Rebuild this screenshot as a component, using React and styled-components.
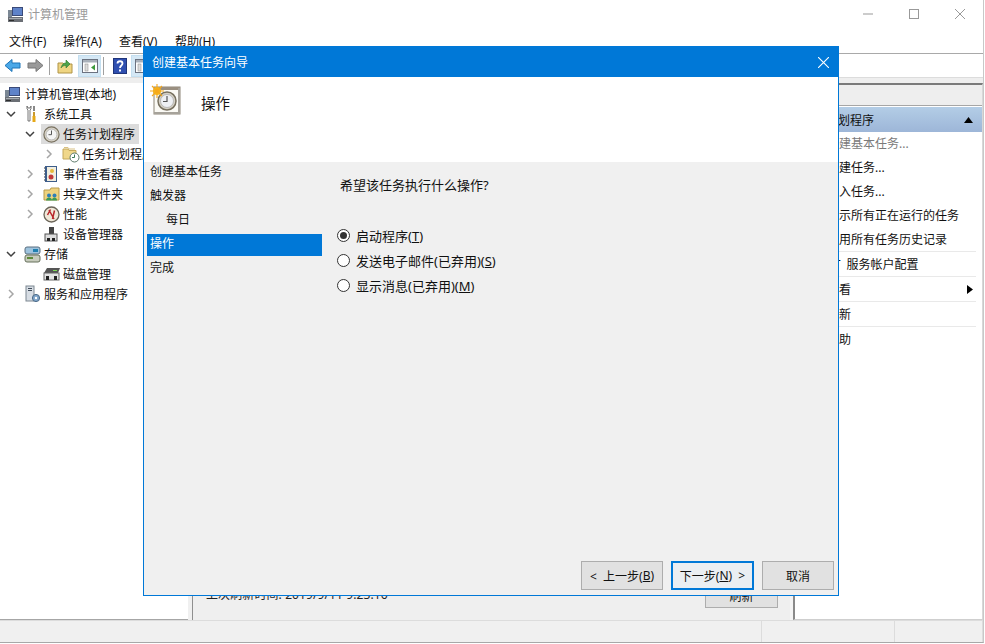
import React from "react";
import styled, { createGlobalStyle } from "styled-components";

const Global = createGlobalStyle`
  html, body { margin: 0; padding: 0; background: #fff; }
  body { font-family: "Noto Sans", "Noto Sans CJK SC", sans-serif; font-size: 12px; color: #111; overflow: hidden; }
  * { box-sizing: border-box; }
`;

const Page = styled.div`
  position: relative;
  width: 985px;
  height: 644px;
  overflow: hidden;
  background: #fff;
`;
const Win = styled.div`
  width: 984px;
  height: 643px;
  display: flex;
  flex-direction: column;
  border-right: 1px solid #c8c8c8;
  border-bottom: 1px solid #a8a8a8;
`;
const TitleBar = styled.div`
  height: 30px;
  flex: none;
  display: flex;
  align-items: center;
  padding: 0 0 2px 7px;
  color: #9a9a9a;
`;
const TitleText = styled.span`
  flex: 1;
  font-size: 12px;
  margin-left: 4px;
`;
const WinBtn = styled.div`
  width: 46px;
  height: 28px;
  flex: none;
  display: flex;
  align-items: center;
  justify-content: center;
`;
const MenuBar = styled.div`
  height: 23px;
  flex: none;
  display: flex;
  align-items: center;
  padding-left: 9px;
  gap: 16px;
  padding-top: 1px;
`;
const MenuItem = styled.span`
  width: 40px;
  white-space: nowrap;
  line-height: 20px;
  &:first-child { width: 38px; }
`;
const ToolBar = styled.div`
  height: 24px;
  flex: none;
  border-top: 1px solid #a9a9a9;
  display: flex;
  align-items: center;
  padding-left: 1px;
`;
const ToolBtn = styled.div`
  width: ${(p) => p.$w || 23}px;
  height: 22px;
  flex: none;
  display: flex;
  align-items: center;
  justify-content: center;
  background: ${(p) => (p.$on ? "#d5e8f5" : "transparent")};
  border: 1px solid ${(p) => (p.$on ? "#c4dff0" : "transparent")};
`;
const ToolSep = styled.div`
  width: 1px;
  height: 18px;
  background: #a0a0a0;
  margin: 0 ${(p) => p.$r}px 0 ${(p) => p.$l}px;
  flex: none;
`;
const Strip = styled.div`
  height: 6px;
  flex: none;
  background: #eeeeee;
  border-top: 1px solid #dcdcdc;
`;
const Main = styled.div`
  flex: 1;
  min-height: 0;
  display: flex;
  background: #f0f0f0;
`;
const Tree = styled.div`
  width: 188px;
  flex: none;
  background: #fff;
  padding-top: 1px;
  border-bottom: 1px solid #a6a6a6;
  overflow: hidden;
`;
const Row = styled.div`
  height: 20px;
  display: flex;
  align-items: center;
  padding-left: ${(p) => (p.$depth === 0 ? 4 : 5 + (p.$depth - 1) * 19)}px;
  white-space: nowrap;
`;
const Chevron = styled.span`
  width: 19px;
  flex: none;
  display: flex;
  align-items: center;
`;
const IconSlot = styled.span`
  width: ${(p) => (p.$root ? 21 : 20)}px;
  flex: none;
  display: flex;
  align-items: center;
`;
const Label = styled.span`
  line-height: 19px;
  padding: 0 1px 0 0;
`;
const SelWrap = styled.span`
  display: flex;
  align-items: center;
  height: 20px;
  margin-left: -2px;
  padding-left: 2px;
  padding-right: 3px;
  background: #dcdcdc;
`;
const TreeSplitter = styled.div`
  width: 5px;
  flex: none;
  background: #f0f0f0;
  border-right: 1px solid #8f8f8f;
`;
const Center = styled.div`
  width: 597px;
  flex: none;
  background: #efefef;
  padding: 504px 0 0 13px;
  display: flex;
  align-items: flex-start;
  justify-content: space-between;
`;
const Refresh = styled.div`
  white-space: nowrap;
  line-height: 16px;
  font-size: 12px;
  letter-spacing: 0.1px;
  color: #222;
`;
const RefreshBtn = styled.div`
  width: 73px;
  height: 24px;
  margin: -3px 12px 0 0;
  background: #e1e1e1;
  border: 1px solid #adadad;
  display: flex;
  align-items: center;
  justify-content: center;
`;
const PaneGap = styled.div`
  width: 3px;
  flex: none;
  background: #f4f4f4;
`;
const Actions = styled.div`
  width: 190px;
  flex: none;
  background: #fff;
  border-left: 2px solid #8a8a8a;
  border-top: 2px solid #7a7a7a;
  border-bottom: 1px solid #cfcfcf;
  border-right: 1px solid #d8d8d8;
  display: flex;
  flex-direction: column;
`;
const ActionsTop = styled.div`
  height: 21px;
  flex: none;
  background: #eeeeee;
  border-bottom: 1px solid #a6a6a6;
  margin-bottom: 1px;
`;
const ActionsHead = styled.div`
  height: 25px;
  flex: none;
  background: linear-gradient(#b3cde6, #9db6d8);
  display: flex;
  align-items: center;
  justify-content: space-between;
  padding: 0 9px 0 7px;
  color: #111;
`;
const ActionsBody = styled.div`
  flex: 1;
  margin: -1px 6px 0 0;
`;
const ActionRow = styled.div`
  height: ${(p) => p.$h || 24}px;
  display: flex;
  align-items: center;
  justify-content: space-between;
  padding-left: 32px;
  padding-right: 3px;
  white-space: nowrap;
  word-spacing: 3px;
  color: ${(p) => (p.$dim ? "#7a7a7a" : "#111")};
  border-bottom: ${(p) => (p.$line ? "1px solid #e9e9e9" : "none")};
`;
const Status = styled.div`
  height: 22px;
  flex: none;
  display: grid;
  grid-template-columns: 762px 133px 1fr;
  background: #f0f0f0;
  border-top: 1px solid #dcdcdc;
`;
const StatusCell = styled.div`
  border-right: 1px solid #dcdcdc;
  background: #f0f0f0;
`;

/* dialog sits on top of the window */
const Dialog = styled.div`
  position: absolute;
  left: 143px;
  top: 46px;
  width: 696px;
  height: 550px;
  background: #f0f0f0;
  border: 1px solid #0078d7;
  display: flex;
  flex-direction: column;
`;
const DlgTitle = styled.div`
  height: 30px;
  flex: none;
  background: #0078d7;
  color: #fff;
  display: flex;
  align-items: center;
  justify-content: space-between;
  padding: 0 9px 0 8px;
`;
const DlgHead = styled.div`
  height: 85px;
  flex: none;
  background: #fff;
  display: flex;
  align-items: flex-start;
  padding: 7px 0 0 6px;
`;
const DlgHeadText = styled.div`
  font-size: 14.5px;
  margin-left: 19px;
  margin-top: 8px;
  line-height: 22px;
`;
const DlgBody = styled.div`
  flex: 1;
  display: flex;
  min-height: 0;
`;
const Steps = styled.div`
  width: 178px;
  flex: none;
  margin-top: -3px;
  padding: 0 0 0 3px;
`;
const Step = styled.div`
  display: flex;
  align-items: center;
  padding-left: ${(p) => (p.$sub ? 19 : 3)}px;
  padding-bottom: ${(p) => (p.$on ? 4 : 0)}px;
  background: ${(p) => (p.$on ? "#0078d7" : "transparent")};
  color: ${(p) => (p.$on ? "#fff" : "#111")};
  height: ${(p) => (p.$on ? 22 : 24)}px;
  margin: ${(p) => (p.$on ? "3px 0 -1px" : "0")};
`;
const Content = styled.div`
  flex: 1;
  padding: 13px 0 0 18px;
  font-size: 13px;
`;
const Question = styled.div`
  line-height: 20px;
  margin-bottom: 28px;
`;
const Radios = styled.div`
  display: flex;
  flex-direction: column;
`;
const RadioRow = styled.div`
  height: 25px;
  display: flex;
  align-items: center;
  gap: 6px;
  margin-left: -3px;
`;
const RadioBox = styled.span`
  width: 13px;
  height: 13px;
  border-radius: 50%;
  border: 1px solid #333;
  background: #fff;
  display: flex;
  align-items: center;
  justify-content: center;
  flex: none;
`;
const RadioDot = styled.span`
  width: 7px;
  height: 7px;
  border-radius: 50%;
  background: #333;
`;
const DlgFoot = styled.div`
  flex: none;
  height: 34px;
  display: flex;
  justify-content: flex-end;
  gap: 8px;
  padding: 0 4px 6px 0;
`;
const Btn = styled.div`
  width: ${(p) => p.$w}px;
  height: 29px;
  display: flex;
  align-items: center;
  justify-content: center;
  white-space: pre;
  background: ${(p) => (p.$primary ? "#eaeef2" : "#e1e1e1")};
  border: ${(p) => (p.$primary ? "2px solid #0078d7" : "1px solid #adadad")};
`;

/* ---------- drawings ---------- */
const Computer = () => (
  <svg width="17" height="17" viewBox="0 0 17 17">
    <rect x="5" y="1" width="11" height="9" fill="#3a4a78" />
    <rect x="6" y="2" width="9" height="7" fill="#5f83c9" />
    <rect x="1" y="4" width="4" height="8" fill="#7b8794" />
    <rect x="1" y="11" width="15" height="5" fill="#6b6f75" />
    <rect x="2" y="12" width="13" height="1" fill="#a6aab0" />
    <rect x="2" y="14" width="5" height="1" fill="#2d2d2d" />
  </svg>
);
const Tools = () => (
  <svg width="14" height="18" viewBox="0 0 14 18">
    <path d="M3 1v3l1 1v11h2V5l1-1V1L6 3H4z" fill="#fff" stroke="#666" strokeWidth=".9" />
    <path d="M10 1v5" stroke="#888" strokeWidth="2" />
    <path d="M10 7v4" stroke="#c99a2e" strokeWidth="2" />
    <path d="M10 11v6" stroke="#e6a817" strokeWidth="3" />
  </svg>
);
const Clock = ({ s = 17 }) => (
  <svg width={s} height={s} viewBox="0 0 17 17">
    <circle cx="8.5" cy="8.5" r="7.6" fill="#d9d4c8" stroke="#77705f" strokeWidth="1.2" />
    <circle cx="8.5" cy="8.5" r="5.4" fill="#f4f4f4" stroke="#a9a9a9" strokeWidth=".7" />
    <path d="M8.5 4.5v4.2h-3" fill="none" stroke="#555" strokeWidth="1" />
  </svg>
);
const FolderClock = () => (
  <svg width="18" height="17" viewBox="0 0 18 17">
    <path d="M1 3h5l1 1.5h7V13H1z" fill="#f0d78a" stroke="#c4a85a" />
    <path d="M2 1.5h4l1 1.5h6" fill="none" stroke="#d8c184" />
    <circle cx="12.5" cy="11.5" r="4.5" fill="#fff" stroke="#5d7a6a" />
    <path d="M12.5 8.5v3H10" fill="none" stroke="#3b7a55" />
  </svg>
);
const EventLog = () => (
  <svg width="16" height="18" viewBox="0 0 16 18">
    <rect x="2" y="1" width="12" height="16" fill="#3d5d8a" />
    <rect x="4" y="2" width="9" height="14" fill="#f1eee0" />
    <path d="M2 3H1M2 6H1M2 9H1M2 12H1M2 15H1" stroke="#333" />
    <circle cx="9" cy="6" r="2" fill="#e7b93a" />
    <circle cx="8" cy="12" r="2.5" fill="#c23a3a" />
  </svg>
);
const Shared = () => (
  <svg width="18" height="16" viewBox="0 0 18 16">
    <path d="M1 4h6l1-2h8v12H1z" fill="#eed27e" stroke="#b89a4a" />
    <circle cx="6" cy="9.5" r="2" fill="#2f7fb8" />
    <path d="M3 14.5c0-2 1.5-3 3-3s3 1 3 3z" fill="#3b9a55" />
    <circle cx="11.5" cy="9.5" r="2" fill="#2f7fb8" />
    <path d="M9 14.5c0-2 1-3 2.5-3s2.5 1 2.5 3z" fill="#3b9a55" />
  </svg>
);
const Perf = () => (
  <svg width="17" height="17" viewBox="0 0 17 17">
    <circle cx="8.5" cy="8.5" r="7.5" fill="#efe8d8" stroke="#6b6559" strokeWidth="1.3" />
    <path d="M6 4l5 9M4.5 9l3-5.5M11.5 4.5L9.5 13" fill="none" stroke="#b8262a" strokeWidth="1.5" />
  </svg>
);
const Device = () => (
  <svg width="16" height="17" viewBox="0 0 16 17">
    <rect x="6" y="1" width="5" height="7" fill="#444" />
    <rect x="2" y="8" width="12" height="7" fill="#ddd" stroke="#555" />
    <rect x="4" y="12" width="3" height="3" fill="#222" />
    <rect x="9" y="12" width="3" height="3" fill="#222" />
  </svg>
);
const Storage = () => (
  <svg width="17" height="17" viewBox="0 0 17 17">
    <rect x="1" y="1" width="15" height="7" rx="2" fill="#9ec3dd" stroke="#5a6f80" />
    <rect x="9" y="3" width="5" height="3" fill="#1f7fb0" />
    <rect x="1" y="9" width="15" height="7" rx="2" fill="#c7cbbd" stroke="#66705a" />
    <rect x="3" y="11" width="6" height="2" fill="#5d8a3a" />
  </svg>
);
const Disk = () => (
  <svg width="18" height="15" viewBox="0 0 18 15">
    <path d="M4 1h13l-2 5H1z" fill="#555" />
    <rect x="10" y="3" width="4" height="1" fill="#7ed957" />
    <rect x="1" y="6" width="15" height="7" fill="#e4e4e4" stroke="#666" />
    <rect x="3" y="9" width="3" height="4" fill="#222" />
    <rect x="11" y="9" width="3" height="4" fill="#222" />
  </svg>
);
const Services = () => (
  <svg width="17" height="18" viewBox="0 0 17 18">
    <rect x="2" y="1" width="8" height="15" fill="#d7dde4" stroke="#7d8791" />
    <rect x="4" y="3" width="4" height="1" fill="#3d4a58" />
    <rect x="4" y="5" width="4" height="1" fill="#3d4a58" />
    <circle cx="12" cy="13" r="3.6" fill="#7fa5c9" stroke="#4c6a88" />
    <circle cx="12" cy="13" r="1.2" fill="#fff" />
  </svg>
);
const Chev = ({ open }) => (
  <svg width="12" height="12" viewBox="0 0 12 12">
    {open ? (
      <path d="M2 4l4 4 4-4" fill="none" stroke="#404040" strokeWidth="1.5" />
    ) : (
      <path d="M4 2l4 4-4 4" fill="none" stroke="#a6a6a6" strokeWidth="1.5" />
    )}
  </svg>
);
const Arrow = ({ color, edge, flip }) => (
  <svg width="17" height="15" viewBox="0 0 17 15" style={flip ? { transform: "scaleX(-1)" } : undefined}>
    <path d="M1 7.5L8 1.5V5h8v5H8v3.5z" fill={color} stroke={edge} />
  </svg>
);
const UpFolder = () => (
  <svg width="16" height="16" viewBox="0 0 16 16">
    <path d="M1 5h5l1 1h8v9H1z" fill="#efd582" stroke="#b09447" />
    <path d="M4 10c1-4 3-5 5-5V2l4 4-4 4V7.5c-2 0-4 .5-5 2.5z" fill="#4ea34a" stroke="#2f7a2f" strokeWidth=".6" />
  </svg>
);
const Panel = () => (
  <svg width="16" height="14" viewBox="0 0 16 14">
    <rect x=".5" y=".5" width="15" height="13" fill="#fff" stroke="#6b7280" />
    <rect x="1" y="1" width="14" height="2.5" fill="#a8b0ba" />
    <rect x="3" y="5" width="3" height="7" fill="#ddd" stroke="#888" strokeWidth=".5" />
    <path d="M13 5.5v6l-4-3z" fill="#3d9a3d" />
  </svg>
);
const Help = () => (
  <svg width="14" height="16" viewBox="0 0 14 16">
    <rect x=".5" y=".5" width="13" height="15" fill="#2f4fb0" stroke="#20357a" />
    <path d="M4.5 5.5c0-3 5-3 5 0 0 2-2.5 2-2.5 4.5" fill="none" stroke="#fff" strokeWidth="1.8" />
    <rect x="6" y="11.5" width="2" height="2" fill="#fff" />
  </svg>
);
const WizardIcon = () => (
  <svg width="32" height="32" viewBox="0 0 32 32">
    <rect x="4" y="3" width="26" height="27" fill="#fbfaf5" stroke="#8d8578" strokeWidth="1" />
    <rect x="4" y="3" width="26" height="3" fill="#9a8f80" />
    <rect x="28" y="4" width="2" height="26" fill="#a6a29a" />
    <rect x="4" y="28" width="26" height="2" fill="#a6a29a" />
    <circle cx="17" cy="17" r="9" fill="#d5d1c6" stroke="#77705f" strokeWidth="1.5" />
    <circle cx="17" cy="17" r="6.5" fill="#eef0f4" stroke="#a9a9a9" strokeWidth=".7" />
    <path d="M17 12v5.5h-4" fill="none" stroke="#555" strokeWidth="1.2" />
    <circle cx="7" cy="7" r="4" fill="#f6b91b" />
    <path d="M7 0v14M0 7h14M2 2l10 10M12 2L2 12" stroke="#f6a81b" strokeWidth="1.1" />
  </svg>
);
const Up = () => (
  <svg width="9" height="6" viewBox="0 0 9 6"><path d="M4.5 0L9 6H0z" fill="#000" /></svg>
);
const Right = () => (
  <svg width="6" height="9" viewBox="0 0 6 9"><path d="M0 0l6 4.5L0 9z" fill="#000" /></svg>
);
const X = ({ color, s = 10 }) => (
  <svg width={s} height={s} viewBox="0 0 10 10">
    <path d="M0 0l10 10M10 0L0 10" stroke={color} strokeWidth="1" />
  </svg>
);

const tree = [
  { d: 0, icon: <Computer />, t: "计算机管理(本地)" },
  { d: 1, c: "open", icon: <Tools />, t: "系统工具" },
  { d: 2, c: "open", icon: <Clock />, t: "任务计划程序", sel: true },
  { d: 3, c: "closed", icon: <FolderClock />, t: "任务计划程序库" },
  { d: 2, c: "closed", icon: <EventLog />, t: "事件查看器" },
  { d: 2, c: "closed", icon: <Shared />, t: "共享文件夹" },
  { d: 2, c: "closed", icon: <Perf />, t: "性能" },
  { d: 2, icon: <Device />, t: "设备管理器" },
  { d: 1, c: "open", icon: <Storage />, t: "存储" },
  { d: 2, icon: <Disk />, t: "磁盘管理" },
  { d: 1, c: "closed", icon: <Services />, t: "服务和应用程序" },
];

const actions = [
  { t: "创建基本任务...", dim: true },
  { t: "创建任务..." },
  { t: "导入任务..." },
  { t: "显示所有正在运行的任务" },
  { t: "启用所有任务历史记录", line: true, h: 25 },
  { t: "AT 服务帐户配置", line: true, h: 25 },
  { t: "查看", line: true, h: 25, more: true },
  { t: "刷新", line: true, h: 25 },
  { t: "帮助" },
];

const radios = [
  { t: "启动程序", k: "T", on: true },
  { t: "发送电子邮件(已弃用)", k: "S" },
  { t: "显示消息(已弃用)", k: "M" },
];

export default function App() {
  return (
    <Page>
      <Global />
      <Win>
        <TitleBar>
          <Computer />
          <TitleText>计算机管理</TitleText>
          <WinBtn><svg width="10" height="10" viewBox="0 0 10 10"><path d="M0 5h10" stroke="#999" /></svg></WinBtn>
          <WinBtn><svg width="10" height="10" viewBox="0 0 10 10"><rect x=".5" y=".5" width="9" height="9" fill="none" stroke="#999" /></svg></WinBtn>
          <WinBtn><X color="#999" /></WinBtn>
        </TitleBar>
        <MenuBar>
          <MenuItem>文件(F)</MenuItem>
          <MenuItem>操作(A)</MenuItem>
          <MenuItem>查看(V)</MenuItem>
          <MenuItem>帮助(H)</MenuItem>
        </MenuBar>
        <ToolBar>
          <ToolBtn><Arrow color="#4aa8e8" edge="#1c74b8" /></ToolBtn>
          <ToolBtn><Arrow color="#9a9a9a" edge="#777" flip /></ToolBtn>
          <ToolSep $l={2} $r={2} />
          <ToolBtn $w={26}><UpFolder /></ToolBtn>
          <ToolBtn $on $w={23}><Panel /></ToolBtn>
          <ToolSep $l={2} $r={4} />
          <ToolBtn><Help /></ToolBtn>
          <ToolBtn $on><Panel /></ToolBtn>
        </ToolBar>
        <Strip />
        <Main>
          <Tree>
            {tree.map((r) => (
              <Row key={r.t} $depth={r.d}>
                {r.d > 0 && <Chevron>{r.c && <Chev open={r.c === "open"} />}</Chevron>}
                {r.sel ? (
                  <SelWrap>
                    <IconSlot>{r.icon}</IconSlot>
                    <Label>{r.t}</Label>
                  </SelWrap>
                ) : (
                  <>
                    <IconSlot $root={r.d === 0}>{r.icon}</IconSlot>
                    <Label>{r.t}</Label>
                  </>
                )}
              </Row>
            ))}
          </Tree>
          <TreeSplitter />
          <Center>
            <Refresh>上次刷新时间: 2019/9/11 9:23:16</Refresh>
            <RefreshBtn>刷新</RefreshBtn>
          </Center>
          <PaneGap />
          <Actions>
            <ActionsTop />
            <ActionsHead>
              <span>任务计划程序</span>
              <Up />
            </ActionsHead>
            <ActionsBody>
              {actions.map((a) => (
                <ActionRow key={a.t} $dim={a.dim} $line={a.line} $h={a.h}>
                  <span>{a.t}</span>
                  {a.more && <Right />}
                </ActionRow>
              ))}
            </ActionsBody>
          </Actions>
        </Main>
        <Status>
          <StatusCell />
          <StatusCell />
          <StatusCell />
        </Status>
      </Win>
      <Dialog>
        <DlgTitle>
          <span>创建基本任务向导</span>
          <X color="#fff" s={11} />
        </DlgTitle>
        <DlgHead>
          <WizardIcon />
          <DlgHeadText>操作</DlgHeadText>
        </DlgHead>
        <DlgBody>
          <Steps>
            <Step>创建基本任务</Step>
            <Step>触发器</Step>
            <Step $sub>每日</Step>
            <Step $on>操作</Step>
            <Step>完成</Step>
          </Steps>
          <Content>
            <Question>希望该任务执行什么操作?</Question>
            <Radios>
              {radios.map((r) => (
                <RadioRow key={r.k}>
                  <RadioBox>{r.on && <RadioDot />}</RadioBox>
                  <span>{r.t}(<u>{r.k}</u>)</span>
                </RadioRow>
              ))}
            </Radios>
          </Content>
        </DlgBody>
        <DlgFoot>
          <Btn $w={82}>{"<  上一步("}<u>B</u>{")"}</Btn>
          <Btn $w={83} $primary>{"下一步("}<u>N</u>{")  >"}</Btn>
          <Btn $w={72}>取消</Btn>
        </DlgFoot>
      </Dialog>
    </Page>
  );
}
